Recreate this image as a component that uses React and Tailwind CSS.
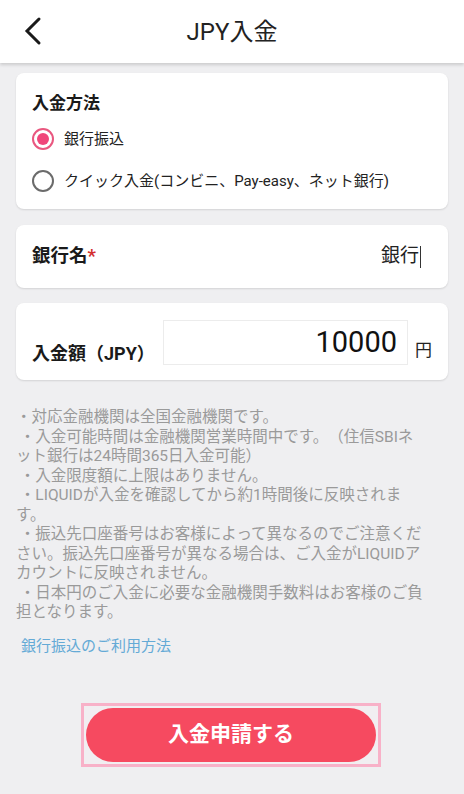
const font = { fontFamily: 'Roboto, "Noto Sans CJK JP", sans-serif' };

const notes = [
  '・対応金融機関は全国金融機関です。',
  ' ・入金可能時間は金融機関営業時間中です。（住信SBIネ',
  'ット銀行は24時間365日入金可能）',
  ' ・入金限度額に上限はありません。',
  ' ・LIQUIDが入金を確認してから約1時間後に反映されま',
  'す。',
  ' ・振込先口座番号はお客様によって異なるのでご注意くだ',
  'さい。振込先口座番号が異なる場合は、ご入金がLIQUIDア',
  'カウントに反映されません。',
  ' ・日本円のご入金に必要な金融機関手数料はお客様のご負',
  '担となります。',
];

function Radio({ checked, label }) {
  return (
    <div className="flex h-[42px] items-center gap-[10px]">
      {checked ? (
        <span className="flex h-[22px] w-[22px] items-center justify-center rounded-full border-2 border-[#e9577f]">
          <span className="h-[12px] w-[12px] rounded-full bg-[#f0467a]" />
        </span>
      ) : (
        <span className="h-[22px] w-[22px] rounded-full border-2 border-[#6b6b6b]" />
      )}
      <span className="text-[15px] text-[#222]">{label}</span>
    </div>
  );
}

export default function App() {
  return (
    <div className="min-h-[794px] w-[464px] bg-[#efeff1] [text-spacing-trim:space-all]" style={font}>
      <header className="relative flex h-[63px] items-center justify-center bg-white shadow-[0_2px_3px_rgba(0,0,0,0.15)]">
        <svg className="absolute left-[22px] top-[16px]" width="20" height="30" viewBox="0 0 20 30">
          <path d="M17 3 L5 15 L17 27" fill="none" stroke="#1a1a1a" strokeWidth="3" strokeLinecap="round" />
        </svg>
        <h1 className="text-[24px] text-[#222]">JPY入金</h1>
      </header>

      <main className="flex flex-col px-4 pt-[10px]">
        <section className="rounded-lg bg-white px-4 pb-[7px] pt-[17px] shadow-[0_1px_2px_rgba(0,0,0,0.12)]">
          <div className="flex h-7 items-center text-[17px] font-bold text-[#1a1a1a]">入金方法</div>
          <Radio checked label="銀行振込" />
          <Radio label="クイック入金(コンビニ、Pay-easy、ネット銀行)" />
        </section>

        <section className="mt-4 flex h-[63px] items-center justify-between rounded-lg bg-white pl-4 pr-[27px] shadow-[0_1px_2px_rgba(0,0,0,0.12)]">
          <div className="text-[18.5px] font-bold text-[#1a1a1a]">
            銀行名<span className="text-[#d32f2f]">*</span>
          </div>
          <div className="flex items-center text-[19px] text-[#222]">
            銀行<span className="ml-[1px] h-[22px] w-px bg-[#333]" />
          </div>
        </section>

        <section className="mt-[15px] flex h-[77px] items-end rounded-lg bg-white pb-[15px] pl-4 shadow-[0_1px_2px_rgba(0,0,0,0.12)]">
          <div className="flex h-6 w-[131px] items-center text-[18px] font-bold text-[#1a1a1a]">入金額（JPY）</div>
          <div className="flex h-[45px] w-[245px] items-center justify-end border border-[#ececec] pr-[10px] text-[29px] text-[#111]">
            10000
          </div>
          <div className="ml-[7px] pb-[2px] text-[17px] text-[#222]">円</div>
        </section>

        <div className="mt-[28px] text-[15.5px] leading-[19.5px] text-[#9a9a9a]">
          {notes.map((line, i) => (
            <div key={i} className="whitespace-pre">{line}</div>
          ))}
        </div>

        <a className="ml-[5px] mt-[13px] text-[15px] leading-[20px] text-[#64aad6]">銀行振込のご利用方法</a>

        <div className="mt-[47px] flex justify-center pr-[2px]">
          <div className="border-[3px] border-[#f8b1c8] bg-[#f1eef1] p-[2px]">
            <button className="flex h-[54px] w-[290px] items-center justify-center rounded-full bg-[#f64a60] text-[21px] font-bold text-white">
              入金申請する
            </button>
          </div>
        </div>
      </main>
    </div>
  );
}
